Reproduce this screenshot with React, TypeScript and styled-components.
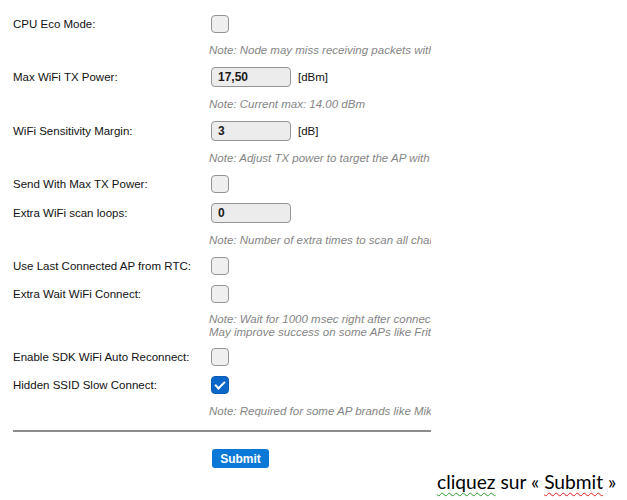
import React from 'react';
import styled, { createGlobalStyle } from 'styled-components';

const GlobalStyle = createGlobalStyle`
  html, body {
    margin: 0;
    padding: 0;
    background: #fff;
  }
  body {
    font-family: "Liberation Sans", Arial, sans-serif;
    font-size: 11.5px;
    color: #111;
  }
`;

const Page = styled.div`
  display: flex;
  width: 627px;
  height: 500px;
  overflow: hidden;
`;

const Panel = styled.div`
  width: 431px;
  flex: none;
  overflow: hidden;
  padding-top: 10px;
  box-sizing: border-box;
`;

const Form = styled.div`
  display: grid;
  grid-template-columns: 198px 400px;
  width: 598px;
  padding-left: 13px;
`;

const Label = styled.div<{ $h: number }>`
  height: ${(p) => p.$h}px;
  display: flex;
  align-items: center;
  white-space: nowrap;
`;

const Value = styled.div<{ $h: number }>`
  height: ${(p) => p.$h}px;
  display: flex;
  align-items: center;
  gap: 7px;
`;

const Note = styled.div<{ $h: number }>`
  grid-column: 2;
  height: ${(p) => p.$h}px;
  display: flex;
  flex-direction: column;
  justify-content: center;
  margin-left: -2px;
  font-style: italic;
  color: #858585;
  line-height: 13px;
  white-space: nowrap;
`;

const Check = styled.input.attrs({ type: 'checkbox' })`
  appearance: none;
  margin: 0;
  width: 18px;
  height: 18px;
  box-sizing: border-box;
  border: 1px solid #959595;
  border-radius: 4px;
  background: #efefef;
  display: grid;
  place-content: center;

  &:checked {
    background: #0a66c8;
    border-color: #0a5cb5;
  }
  &:checked::after {
    content: '';
    width: 8px;
    height: 4px;
    border-left: 2px solid #fff;
    border-bottom: 2px solid #fff;
    transform: translate(0, -1px) rotate(-45deg);
  }
`;

const NumInput = styled.input`
  margin: 0;
  width: 80px;
  height: 20px;
  box-sizing: border-box;
  border: 1px solid #959595;
  border-radius: 4px;
  background: #ececec;
  padding: 0 6px;
  font-family: "Liberation Sans", Arial, sans-serif;
  font-size: 12px;
  font-weight: bold;
  color: #1a1a1a;
`;

const Unit = styled.span`
  white-space: nowrap;
`;

const Rule = styled.div`
  margin: 7px 0 0 13px;
  width: 430px;
  height: 2px;
  background: #8c8c8c;
`;

const Actions = styled.div`
  padding: 17px 0 0 212px;
`;

const SubmitButton = styled.button`
  width: 57px;
  height: 19px;
  border: none;
  border-radius: 3px;
  background: #0a78d6;
  color: #fff;
  font-family: "Liberation Sans", Arial, sans-serif;
  font-size: 12px;
  font-weight: bold;
  padding: 0;
`;

const Caption = styled.div`
  align-self: flex-end;
  margin: 0 0 7px 6px;
  font-family: Lato, "Open Sans", sans-serif;
  font-size: 19.2px;
  color: #000;
  white-space: nowrap;
`;

const Squiggle = styled.span<{ $color: string }>`
  text-decoration: underline wavy ${(p) => p.$color};
  text-decoration-thickness: 1px;
  text-underline-offset: 3px;
`;

type Row =
  | { kind: 'check'; label: string; checked?: boolean }
  | { kind: 'input'; label: string; value: string; unit?: string }
  | { kind: 'note'; lines: string[] };

const rows: Row[] = [
  { kind: 'check', label: 'CPU Eco Mode:' },
  { kind: 'note', lines: ['Note: Node may miss receiving packets with Eco mode enabled'] },
  { kind: 'input', label: 'Max WiFi TX Power:', value: '17,50', unit: '[dBm]' },
  { kind: 'note', lines: ['Note: Current max: 14.00 dBm'] },
  { kind: 'input', label: 'WiFi Sensitivity Margin:', value: '3', unit: '[dB]' },
  { kind: 'note', lines: ['Note: Adjust TX power to target the AP with (sensitivity + margin) dBm signal strength'] },
  { kind: 'check', label: 'Send With Max TX Power:' },
  { kind: 'input', label: 'Extra WiFi scan loops:', value: '0' },
  { kind: 'note', lines: ['Note: Number of extra times to scan all channels to have higher chance'] },
  { kind: 'check', label: 'Use Last Connected AP from RTC:' },
  { kind: 'check', label: 'Extra Wait WiFi Connect:' },
  {
    kind: 'note',
    lines: [
      'Note: Wait for 1000 msec right after connecting to WiFi.',
      'May improve success on some APs like Fritz!Box',
    ],
  },
  { kind: 'check', label: 'Enable SDK WiFi Auto Reconnect:' },
  { kind: 'check', label: 'Hidden SSID Slow Connect:', checked: true },
  { kind: 'note', lines: ['Note: Required for some AP brands like Mikrotik to connect to hidden SSID'] },
];

export default function App() {
  return (
    <>
      <GlobalStyle />
      <Page>
        <Panel>
          <Form>
            {rows.map((row, i) => {
              if (row.kind === 'note') {
                return (
                  <Note key={i} $h={row.lines.length > 1 ? 35 : 24}>
                    {row.lines.map((l) => (
                      <span key={l}>{l}</span>
                    ))}
                  </Note>
                );
              }
              const h = row.kind === 'check' ? 28 : 30;
              return (
                <React.Fragment key={i}>
                  <Label $h={h}>{row.label}</Label>
                  <Value $h={h}>
                    {row.kind === 'check' ? (
                      <Check defaultChecked={row.checked} />
                    ) : (
                      <>
                        <NumInput defaultValue={row.value} />
                        {row.unit && <Unit>{row.unit}</Unit>}
                      </>
                    )}
                  </Value>
                </React.Fragment>
              );
            })}
          </Form>
          <Rule />
          <Actions>
            <SubmitButton>Submit</SubmitButton>
          </Actions>
        </Panel>
        <Caption>
          <Squiggle $color="#2a9d2a">cliquez</Squiggle> sur «{' '}
          <Squiggle $color="#e02020">Submit</Squiggle> »
        </Caption>
      </Page>
    </>
  );
}
